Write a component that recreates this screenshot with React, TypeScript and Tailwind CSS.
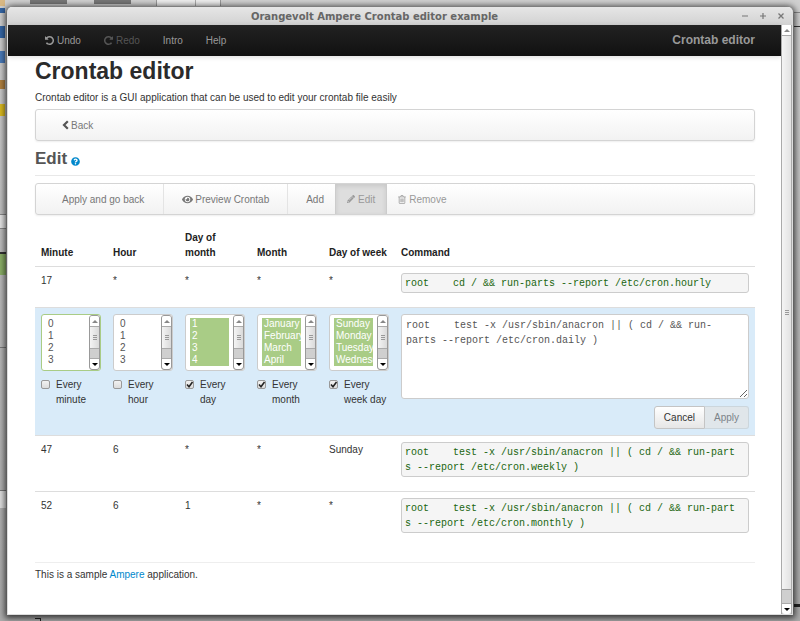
import type { ReactNode } from "react";
import { FaEye, FaPencilAlt, FaQuestionCircle } from "react-icons/fa";

function TurnIcon({ flip = false }: { flip?: boolean }) {
  return (
    <svg
      viewBox="0 128 1536 1536"
      fill="currentColor"
      aria-hidden="true"
      className={flip ? "size-[9px] -scale-x-100" : "size-[9px]"}
    >
      <path d="M1536 896q0 156-61 298t-164 245-245 164-298 61q-172 0-327-72.5t-264-204.5q-7-10-6.5-22.5t8.5-20.5l137-138q10-9 25-9 16 2 23 12 73 95 179 147t225 52q104 0 198.5-40.5t163.5-109.5 109.5-163.5 40.5-198.5-40.5-198.5-109.5-163.5-163.5-109.5-198.5-40.5q-98 0-188 35.5t-160 101.5l137 138q31 30 14 69-17 40-59 40h-448q-26 0-45-19t-19-45v-448q0-42 40-59 39-17 69 14l130 129q107-101 244.5-156.5t284.5-55.5q156 0 298 61t245 164 164 245 61 298z" />
    </svg>
  );
}

function BackIcon() {
  return (
    <svg viewBox="0 0 7 10" aria-hidden="true" className="h-[10px] w-[7px] text-[#555]">
      <path d="M5.800 1.200L2 5l3.800 3.800" fill="none" stroke="currentColor" strokeWidth="2.200" />
    </svg>
  );
}

function TrashIcon() {
  return (
    <svg viewBox="0 0 8 9" aria-hidden="true" className="h-[9px] w-[8px]" fill="none" stroke="currentColor" strokeWidth="0.8">
      <path d="M0.200 1.900h7.600M2.600 1.800l0.500-1.300h1.800l0.500 1.300M1.200 2v5.800q0 0.800 0.800 0.800h4q0.800 0 0.800-0.800V2M2.900 3.500v3.700M4 3.500v3.700M5.100 3.500v3.700" />
    </svg>
  );
}

function Arrow({ down = false, dark = false }: { down?: boolean; dark?: boolean }) {
  return (
    <svg
      viewBox="0 0 6 3"
      aria-hidden="true"
      className={dark ? "h-[3px] w-[6px] text-black" : "h-[3px] w-[6px] text-[#888]"}
    >
      <path d={down ? "M0 0h6L3 3z" : "M0 3h6L3 0z"} fill="currentColor" />
    </svg>
  );
}

function Grip() {
  return (
    <span className="flex w-1 flex-col gap-px">
      <span className="h-px bg-[#999]" />
      <span className="h-px bg-[#999]" />
      <span className="h-px bg-[#999]" />
    </span>
  );
}

function ScrollBar({ small = false }: { small?: boolean }) {
  return (
    <div
      aria-hidden="true"
      className={
        small
          ? "flex w-[11px] shrink-0 flex-col overflow-hidden rounded-[3px] border border-[#999] bg-[#cfcfcf]"
          : "flex w-[11px] shrink-0 flex-col border-x border-[#aaa] bg-[#cfcfcf]"
      }
    >
      <div className="flex h-[11px] shrink-0 items-center justify-center border-b border-[#aaa] bg-white">
        <Arrow />
      </div>
      <div
        className={
          small
            ? "flex h-[22px] items-center justify-center border-b border-[#aaa] bg-linear-to-r from-[#f4f4f4] to-[#dadada]"
            : "flex flex-1 items-center justify-center border-b border-[#999] bg-linear-to-r from-[#f4f4f4] to-[#e2e2e2]"
        }
      >
        <Grip />
      </div>
      <div className={small ? "flex-1" : "h-[13px]"} />
      <div className="flex h-[11px] shrink-0 items-center justify-center rounded-b-[3px] border-t border-[#aaa] bg-white">
        <Arrow down dark />
      </div>
    </div>
  );
}

type Field = {
  name: string;
  unit: string;
  options: string[];
  all: boolean;
  focused?: boolean;
};

const fields: Field[] = [
  { name: "Minute", unit: "minute", options: ["0", "1", "2", "3"], all: false, focused: true },
  { name: "Hour", unit: "hour", options: ["0", "1", "2", "3"], all: false },
  { name: "Day of month", unit: "day", options: ["1", "2", "3", "4"], all: true },
  { name: "Month", unit: "month", options: ["January", "February", "March", "April"], all: true },
  { name: "Day of week", unit: "week day", options: ["Sunday", "Monday", "Tuesday", "Wednesday"], all: true },
];

function FieldEditor({ field }: { field: Field }) {
  return (
    <td className="py-[6px] pl-[6px] align-top">
      <div
        className={
          field.focused
            ? "flex h-[57px] w-[60px] rounded-[3px] border border-[#a9cc86] bg-white"
            : "flex h-[57px] w-[60px] rounded-[3px] border border-[#ccc] bg-white"
        }
      >
        <select
          multiple
          size={4}
          aria-label={field.name}
          defaultValue={field.all ? field.options : []}
          className="min-w-0 flex-1 overflow-hidden bg-transparent py-[3px] pr-[4px] pl-[4px] text-[10px] text-[#555] outline-none [scrollbar-width:none]"
        >
          {field.options.map((o) => (
            <option
              key={o}
              className="h-[12px] min-h-0 overflow-hidden px-[2px] py-0 leading-[12px] checked:bg-[#a9cc86] checked:text-white"
            >
              {o}
            </option>
          ))}
        </select>
        <ScrollBar small />
      </div>
      <label className="mt-[6px] flex items-start gap-[6px]">
        <input
          type="checkbox"
          defaultChecked={field.all}
          className="peer mt-[3px] size-[9px] shrink-0 appearance-none rounded-[2px] border border-[#999] bg-linear-to-b from-[#f2f2f2] to-[#dcdcdc]"
        />
        <svg
          viewBox="0 0 9 9"
          aria-hidden="true"
          className="invisible mt-[3px] -ml-[15px] size-[9px] shrink-0 text-[#222] peer-checked:visible"
        >
          <path d="M2 4.5l2 2.2L7.5 2" fill="none" stroke="currentColor" strokeWidth="1.6" />
        </svg>
        <span>
          Every
          <br />
          {field.unit}
        </span>
      </label>
    </td>
  );
}

function Entry({ values, command }: { values: string[]; command: string }) {
  return (
    <tr className="border-t border-[#ddd] align-top">
      {values.map((v, i) => (
        <td key={i} className="px-[6px] pt-[6px]">
          {v}
        </td>
      ))}
      <td className="px-[6px] pt-[6px] pb-[14px]">
        <pre className="rounded-[3px] border border-[#ccc] bg-[#f5f5f5] pt-[2px] pr-[11px] pb-px pl-[3px] font-['Liberation_Mono',monospace] text-[10px] leading-[15px] break-all whitespace-pre-wrap text-[#20660f]">
          {command}
        </pre>
      </td>
    </tr>
  );
}

function Bar({ children }: { children: ReactNode }) {
  return (
    <div className="flex h-[32px] items-stretch overflow-hidden rounded-[3px] border border-[#d4d4d4] bg-linear-to-b from-white to-[#f2f2f2] text-[#777] shadow-[0_1px_2px_rgba(0,0,0,0.07)]">
      {children}
    </div>
  );
}

const headings = ["Minute", "Hour", "Day of month", "Month", "Day of week"];

export default function App() {
  return (
    <div className="relative flex min-h-screen flex-col bg-[#b4b4b4] px-[7px] pt-[7px] pb-[6px] font-['Liberation_Sans',Arial,sans-serif] text-[10px] leading-[15px] text-[#333]">
      <div
        aria-hidden="true"
        className="absolute inset-0 overflow-hidden bg-linear-to-b from-[#d0d0d0] via-[#b8b8b8] to-[#aaa]"
      >
        <div className="absolute top-0 left-[30px] h-[4px] w-[37px] bg-[#777]" />
        <div className="absolute top-0 left-[94px] h-[4px] w-[37px] bg-[#777]" />
        <div className="absolute top-0 left-[156px] h-[6px] w-[65px] border-x border-[#999] bg-[#eee]" />
        <div className="absolute top-0 left-[195px] h-[6px] w-px bg-[#aaa]" />
        <div className="absolute top-0 left-0 h-[6px] w-[5px] bg-[#d8b884]" />
        <div className="absolute top-[8px] left-0 h-[5px] w-[5px] bg-[#3465a4]" />
        <div className="absolute top-[26px] left-0 h-[12px] w-[5px] bg-[#3465a4]" />
        <div className="absolute top-[51px] left-0 h-[12px] w-[5px] bg-[#4a7ab8]" />
        <div className="absolute top-[80px] left-0 h-[9px] w-[5px] bg-[#b08040]" />
        <div className="absolute top-[104px] left-0 h-[12px] w-[5px] bg-[#d8b820]" />
        <div className="absolute top-[214px] left-0 h-[15px] w-[6px] border-y border-[#888] bg-[#e4e4e4]" />
        <div className="absolute top-[252px] left-0 h-[23px] w-[6px] border-t-2 border-[#333] bg-[#8aae66]" />
        <div className="absolute top-[347px] left-0 h-px w-[6px] bg-[#777]" />
        <div className="absolute top-[490px] left-0 h-[18px] w-[6px] border-t border-[#777] bg-[#ddd]" />
        <div className="absolute top-[12px] right-0 h-px w-[6px] bg-[#888]" />
        <div className="absolute top-[26px] right-0 h-px w-[6px] bg-[#333]" />
        <div className="absolute top-[604px] right-0 h-[3px] w-[6px] bg-[#222]" />
        <div className="absolute bottom-0 left-[35px] h-[3px] w-[6px] border-t border-r border-[#222]" />
      </div>

      <div className="relative flex flex-1 flex-col overflow-hidden rounded-t-[5px] border-x border-b border-[#ddd] bg-white shadow-[0_1px_6px_2px_rgba(0,0,0,0.7)]">
        <header className="flex h-[18px] items-center bg-linear-to-b from-[#e6e6e6] to-[#d2d2d2] font-['DejaVu_Sans',sans-serif] font-bold text-[#666]">
          <h2 className="flex-1 text-center">Orangevolt Ampere Crontab editor example</h2>
          <div className="flex gap-[10px] pr-[7px]">
            <button aria-label="Minimize" className="flex size-[8px] items-center">
              <svg viewBox="0 0 8 8" className="size-[8px]">
                <path d="M1 4h6" stroke="#777" strokeWidth="1.2" />
              </svg>
            </button>
            <button aria-label="Maximize" className="flex size-[8px] items-center">
              <svg viewBox="0 0 8 8" className="size-[8px]">
                <path d="M1 4h6M4 1v6" stroke="#777" strokeWidth="1.2" />
              </svg>
            </button>
            <button aria-label="Close" className="flex size-[8px] items-center">
              <svg viewBox="0 0 8 8" className="size-[8px]">
                <path d="M1.5 1.5l5 5M6.5 1.5l-5 5" stroke="#777" strokeWidth="1.3" />
              </svg>
            </button>
          </div>
        </header>

        <div className="flex flex-1">
          <div className="min-w-0 flex-1">
            <nav className="flex h-[31px] items-center bg-linear-to-b from-[#222] to-[#111] pr-[26px] pl-[37px] text-[#999] shadow-[0_1px_5px_rgba(0,0,0,0.15)]">
              <button className="flex items-center gap-[3px]">
                <TurnIcon />
                Undo
              </button>
              <button disabled className="ml-[23px] flex items-center gap-[3px] text-[#555]">
                <TurnIcon flip />
                Redo
              </button>
              <a href="#intro" className="ml-[23px]">Intro</a>
              <a href="#help" className="ml-[23px]">Help</a>
              <a href="#home" className="ml-auto text-[12px] font-bold">Crontab editor</a>
            </nav>

            <main className="pr-[26px] pl-[27px]">
              <h1 className="text-[23px] leading-[30px] font-bold text-[#2b2b2b]">Crontab editor</h1>
              <p className="mt-[4px] mb-[4px]">
                Crontab editor is a GUI application that can be used to edit your crontab file easily
              </p>
              <Bar>
                <button className="flex items-center gap-[2px] pl-[26px]">
                  <BackIcon />
                  Back
                </button>
              </Bar>

              <h2 className="mt-[8px] flex h-[20px] items-center gap-[4px] text-[17px] leading-[20px] font-bold text-[#555]">
                Edit
                <a href="#edit-help" aria-label="Help">
                  <FaQuestionCircle className="mt-[4px] size-[9px] text-[#0088cc]" />
                </a>
              </h2>
              <hr className="mt-[6px] mb-[7px] border-[#e8e8e8]" />

              <Bar>
                <button className="border-r border-[#e4e4e4] pr-[19px] pl-[26px]">Apply and go back</button>
                <button className="flex items-center gap-[2px] border-r border-[#e4e4e4] px-[18px]">
                  <FaEye className="size-[11px]" />
                  Preview Crontab
                </button>
                <button className="pr-[11px] pl-[18px]">Add</button>
                <button className="flex items-center gap-[3px] border-x border-[#ccc] bg-[#dedede] px-[11px] text-[#999] shadow-[inset_0_2px_5px_rgba(0,0,0,0.1)]">
                  <FaPencilAlt className="size-[8px]" />
                  Edit
                </button>
                <button disabled className="flex items-center gap-[3px] px-[11px] text-[#999]">
                  <TrashIcon />
                  Remove
                </button>
              </Bar>

              <table className="mt-[9px] w-full table-fixed border-collapse">
                <colgroup>
                  {headings.map((h) => (
                    <col key={h} className="w-[72px]" />
                  ))}
                  <col />
                </colgroup>
                <thead>
                  <tr className="text-left align-bottom font-bold text-[#222]">
                    {headings.map((h) => (
                      <th key={h} className={h === "Day of week" ? "p-[6px] pr-0" : "p-[6px]"}>
                        {h}
                      </th>
                    ))}
                    <th className="p-[6px]">Command</th>
                  </tr>
                </thead>
                <tbody>
                  <Entry
                    values={["17", "*", "*", "*", "*"]}
                    command="root    cd / && run-parts --report /etc/cron.hourly"
                  />
                  <tr className="border-t border-[#ddd] bg-[#d9ebf9] align-top">
                    {fields.map((f) => (
                      <FieldEditor key={f.name} field={f} />
                    ))}
                    <td className="p-[6px]">
                      <textarea
                        aria-label="Command"
                        defaultValue="root    test -x /usr/sbin/anacron || ( cd / && run-parts --report /etc/cron.daily )"
                        className="block h-[85px] w-full rounded-[3px] border border-[#ccc] bg-white py-[3px] pr-[14px] pl-[4px] font-['Liberation_Mono',monospace] text-[10px] leading-[15px] text-[#555]"
                      />
                      <div className="mt-[7px] flex justify-end">
                        <button className="h-[23px] rounded-l-[3px] border border-[#c4c4c4] bg-linear-to-b from-white to-[#e6e6e6] px-[9px] text-[#333]">
                          Cancel
                        </button>
                        <button disabled className="h-[23px] rounded-r-[3px] border border-l-0 border-[#ccd6dc] bg-[#e0e6ea] px-[9px] text-[#7b8389]">
                          Apply
                        </button>
                      </div>
                    </td>
                  </tr>
                  <Entry
                    values={["47", "6", "*", "*", "Sunday"]}
                    command="root    test -x /usr/sbin/anacron || ( cd / && run-parts --report /etc/cron.weekly )"
                  />
                  <Entry
                    values={["52", "6", "1", "*", "*"]}
                    command="root    test -x /usr/sbin/anacron || ( cd / && run-parts --report /etc/cron.monthly )"
                  />
                </tbody>
              </table>

              <hr className="mt-[15px] mb-[4px] border-[#eee]" />
              <footer>
                This is a sample <a href="#ampere" className="text-[#0088cc]">Ampere</a> application.
              </footer>
            </main>
          </div>
          <ScrollBar />
        </div>
      </div>
    </div>
  );
}
